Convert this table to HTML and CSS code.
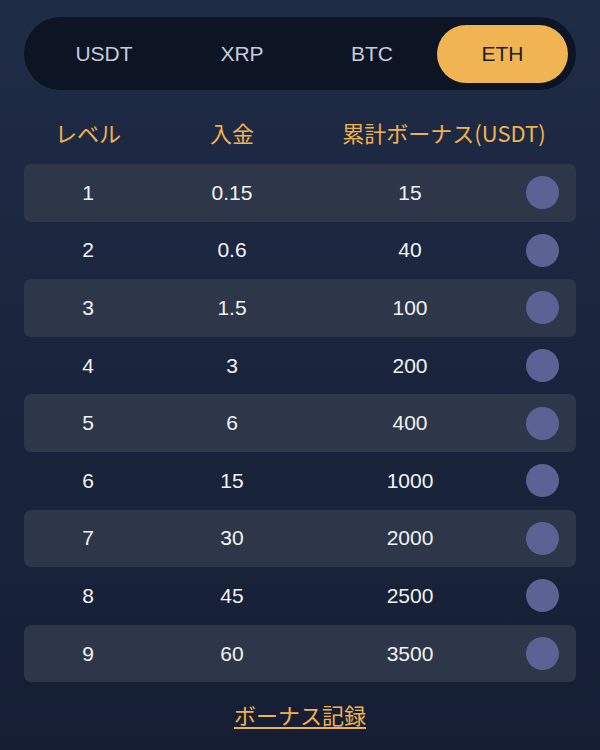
FILE: index.html
```html
<!DOCTYPE html>
<html lang="ja">
<head>
<meta charset="utf-8">
<link rel="stylesheet" href="styles.css">
</head>
<body>
<div class="page">
  <div class="tabs">
    <div class="tab">USDT</div>
    <div class="tab">XRP</div>
    <div class="tab">BTC</div>
    <div class="tab active">ETH</div>
  </div>
  <div class="head">
    <div class="c1">レベル</div>
    <div class="c2">入金</div>
    <div class="c34">累計ボーナス(USDT)</div>
  </div>
  <div class="rows">
    <div class="row odd"><div>1</div><div>0.15</div><div>15</div><div class="dotc"><span class="dot"></span></div></div>
    <div class="row"><div>2</div><div>0.6</div><div>40</div><div class="dotc"><span class="dot"></span></div></div>
    <div class="row odd"><div>3</div><div>1.5</div><div>100</div><div class="dotc"><span class="dot"></span></div></div>
    <div class="row"><div>4</div><div>3</div><div>200</div><div class="dotc"><span class="dot"></span></div></div>
    <div class="row odd"><div>5</div><div>6</div><div>400</div><div class="dotc"><span class="dot"></span></div></div>
    <div class="row"><div>6</div><div>15</div><div>1000</div><div class="dotc"><span class="dot"></span></div></div>
    <div class="row odd"><div>7</div><div>30</div><div>2000</div><div class="dotc"><span class="dot"></span></div></div>
    <div class="row"><div>8</div><div>45</div><div>2500</div><div class="dotc"><span class="dot"></span></div></div>
    <div class="row odd"><div>9</div><div>60</div><div>3500</div><div class="dotc"><span class="dot"></span></div></div>
  </div>
  <div class="footer"><a class="link" href="#">ボーナス記録</a></div>
</div>
</body>
</html>
```
FILE: styles.css
```css
html, body {
  margin: 0;
  padding: 0;
}
body {
  width: 600px;
  height: 750px;
  overflow: hidden;
  background: linear-gradient(180deg, #1f2c46 0%, #1a253d 50%, #151e33 100%);
  font-family: "Liberation Sans", "Noto Sans CJK JP", sans-serif;
  color: #f2f3f6;
}
.page {
  padding: 17px 24px 0 24px;
}
.tabs {
  height: 73px;
  background: #0d1424;
  border-radius: 37px;
  display: grid;
  grid-template-columns: 146px 130px 130px 131px;
  align-items: center;
  padding: 0 8px 0 7px;
  box-sizing: border-box;
}
.tab {
  height: 58px;
  border-radius: 29px;
  display: flex;
  align-items: center;
  justify-content: center;
  font-size: 21px;
  color: #c6cbdc;
}
.tab.active {
  background: #f0b452;
  color: #1c2130;
}
.head {
  display: grid;
  grid-template-columns: 128px 160px 264px;
  height: 74px;
  padding-top: 10px;
  box-sizing: border-box;
  align-items: center;
  text-align: center;
  font-family: "Noto Sans CJK JP", sans-serif;
  font-size: 22px;
  color: #f0b24e;
}
.rows {
  display: flex;
  flex-direction: column;
}
.row {
  display: grid;
  grid-template-columns: 128px 160px 196px 68px;
  height: 57.6px;
  align-items: center;
  text-align: center;
  font-size: 21px;
  border-radius: 7px;
}
.row.odd {
  background: #2d3749;
}
.dotc {
  display: flex;
  justify-content: center;
}
.dot {
  width: 33px;
  height: 33px;
  border-radius: 50%;
  background: #5b6395;
}
.footer {
  display: flex;
  justify-content: center;
  padding-top: 16px;
}
.link {
  font-family: "Noto Sans CJK JP", sans-serif;
  font-size: 22px;
  color: #f0b24e;
  text-decoration: underline;
  text-underline-offset: 3px;
  text-decoration-thickness: 1.5px;
}
```
